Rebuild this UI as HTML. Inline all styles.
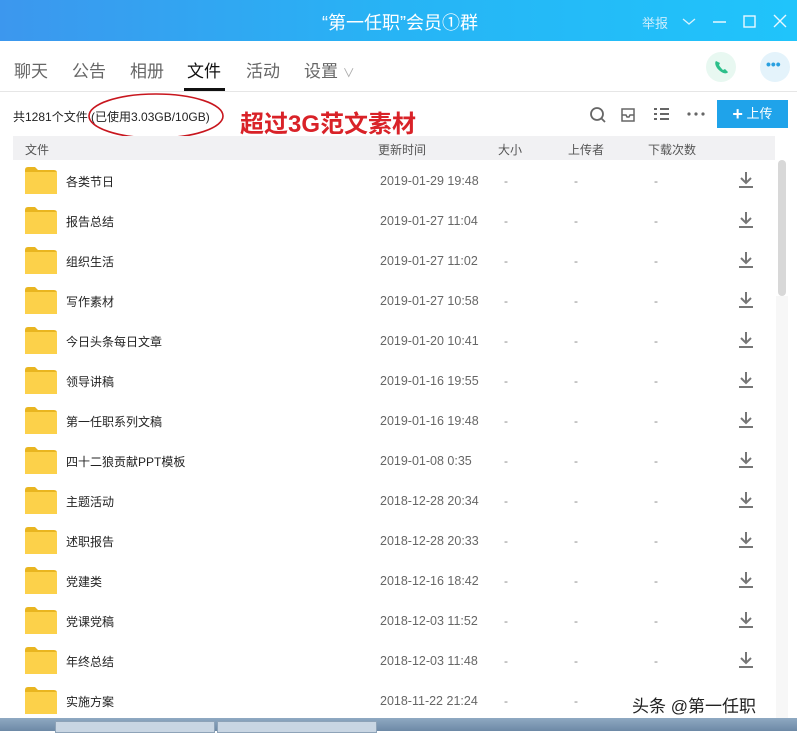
<!DOCTYPE html><html><head><meta charset="utf-8"><style>
body{margin:0;width:797px;height:731px;overflow:hidden;background:#fff;font-family:"Liberation Sans","Noto Sans CJK SC",sans-serif;position:relative}
.a{position:absolute;white-space:nowrap}
.title{left:0;top:0;width:797px;height:41px;background:linear-gradient(90deg,#3c97ee,#27b4f5 50%,#20c4fb)}
.tab{top:57px;font-size:17px;color:#666}
.row{position:absolute;left:0;width:775px;height:40px}
.fold{position:absolute;left:25px;top:-13px;width:32px;height:27px}
.nm{position:absolute;left:66px;top:-7px;font-size:12px;color:#222}
.dt{position:absolute;left:380px;top:-6px;font-size:12.5px;color:#666}
.ds{position:absolute;top:-6px;font-size:12px;color:#888}
.dl{position:absolute;left:738px;top:-9px}
</style></head><body>
<div class="a title"></div>
<div class="a" style="left:322px;top:9px;font-size:18px;color:#fff">“第一任职”会员①群</div>
<div class="a" style="left:642px;top:13px;font-size:13px;color:#cdeefd">举报</div>
<svg class="a" style="left:680px;top:12px" width="110" height="20"><path d="M3 7l6 5 6-5" stroke="#d8f3fe" fill="none" stroke-width="1.3"/><path d="M33 10h13" stroke="#e8f8ff" stroke-width="1.5"/><rect x="64" y="4" width="11" height="11" fill="none" stroke="#e8f8ff" stroke-width="1.4"/><path d="M94 3l12 12M106 3l-12 12" stroke="#e8f8ff" stroke-width="1.4"/></svg>
<div class="a tab" style="left:14px">聊天</div>
<div class="a tab" style="left:72px">公告</div>
<div class="a tab" style="left:130px">相册</div>
<div class="a tab" style="left:187px;color:#111">文件</div>
<div class="a" style="left:184px;top:88px;width:41px;height:3px;background:#111"></div>
<div class="a tab" style="left:246px">活动</div>
<div class="a tab" style="left:304px">设置 <span style="font-size:12px;color:#aaa">∨</span></div>
<div class="a" style="left:0;top:91px;width:797px;height:1px;background:#e6e6e6"></div>
<div class="a" style="left:706px;top:52px;width:30px;height:30px;border-radius:50%;background:#e8f8f1"></div>
<svg class="a" style="left:713px;top:59px" width="16" height="16"><path d="M3 2c-2 2 0 7 4 10s7 3 8 1l-3-3-2 1c-1-1-3-3-4-5l1-2z" fill="#2cbf8a"/></svg>
<div class="a" style="left:760px;top:52px;width:30px;height:30px;border-radius:50%;background:#e4f3fb"></div>
<div class="a" style="left:766px;top:56px;font-size:14px;color:#2aa0e0;font-weight:bold">•••</div>
<div class="a" style="left:13px;top:108px;font-size:12px;color:#222">共1281个文件 (已使用3.03GB/10GB)</div>
<svg class="a" style="left:88px;top:92px" width="140" height="50"><ellipse cx="68" cy="24" rx="67" ry="22" fill="none" stroke="#c8161e" stroke-width="1.6"/></svg>
<div class="a" style="left:240px;top:104px;font-size:24px;font-weight:bold;color:#d92228">超过3G范文素材</div>
<svg class="a" style="left:588px;top:104px" width="120" height="22"><circle cx="9" cy="10" r="6" fill="none" stroke="#666" stroke-width="1.8"/><path d="M13 14l4 4" stroke="#666" stroke-width="1.8"/><path d="M34 5h12v12h-12z M34 11h4l1 2h2l1-2h4" fill="none" stroke="#666" stroke-width="1.5"/><path d="M66 5h3M66 10h3M66 15h3M72 5h9M72 10h9M72 15h9" stroke="#666" stroke-width="2"/><circle cx="101" cy="10" r="1.6" fill="#666"/><circle cx="108" cy="10" r="1.6" fill="#666"/><circle cx="115" cy="10" r="1.6" fill="#666"/></svg>
<div class="a" style="left:717px;top:100px;width:71px;height:28px;background:#1fa3ea;color:#fff;font-size:13px;line-height:28px;text-align:center"><b style="font-size:18px;vertical-align:-2px">+</b> 上传</div>
<div class="a" style="left:13px;top:136px;width:762px;height:24px;background:#f1f1f3"></div>
<div class="a" style="left:25px;top:141px;font-size:12px;color:#555">文件</div>
<div class="a" style="left:378px;top:141px;font-size:12px;color:#555">更新时间</div>
<div class="a" style="left:498px;top:141px;font-size:12px;color:#555">大小</div>
<div class="a" style="left:568px;top:141px;font-size:12px;color:#555">上传者</div>
<div class="a" style="left:648px;top:141px;font-size:12px;color:#555">下载次数</div>
<div class="a" style="left:778px;top:160px;width:8px;height:136px;border-radius:4px;background:#d8d8d8"></div>
<div class="a" style="left:776px;top:296px;width:12px;height:422px;background:#f7f7f7"></div>
<div id="rows"></div>
<div class="a" style="left:632px;top:692px;font-size:17px;color:#222;text-shadow:0 0 2px #fff">头条 @第一任职</div>
<div class="a" style="left:0;top:718px;width:797px;height:13px;background:linear-gradient(#8fa9c2,#6d89a6)"></div>
<div class="a" style="left:55px;top:721px;width:158px;height:10px;background:#c9d6e3;border:1px solid #8ea3b8"></div>
<div class="a" style="left:217px;top:721px;width:158px;height:10px;background:#c9d6e3;border:1px solid #8ea3b8"></div>
<script>
var d=[["各类节日","2019-01-29 19:48"],["报告总结","2019-01-27 11:04"],["组织生活","2019-01-27 11:02"],["写作素材","2019-01-27 10:58"],["今日头条每日文章","2019-01-20 10:41"],["领导讲稿","2019-01-16 19:55"],["第一任职系列文稿","2019-01-16 19:48"],["四十二狼贡献PPT模板","2019-01-08 0:35"],["主题活动","2018-12-28 20:34"],["述职报告","2018-12-28 20:33"],["党建类","2018-12-16 18:42"],["党课党稿","2018-12-03 11:52"],["年终总结","2018-12-03 11:48"],["实施方案","2018-11-22 21:24"]];
var h="";d.forEach(function(r,i){var y=180+i*40;h+='<div class="row" style="top:'+y+'px"><svg class="fold" viewBox="0 0 32 27"><path d="M0 3q0-3 3-3h7l3 3h16q3 0 3 3v21H0z" fill="#e9b520"/><rect x="0" y="5" width="32" height="22" fill="#fcd14a"/></svg><div class="nm">'+r[0]+'</div><div class="dt">'+r[1]+'</div><div class="ds" style="left:504px">-</div><div class="ds" style="left:574px">-</div><div class="ds" style="left:654px">-</div>'+(i<13?'<svg class="dl" width="16" height="18"><path d="M8 1v10M3 7l5 5 5-5" stroke="#777" stroke-width="2" fill="none"/><path d="M1 16h14" stroke="#777" stroke-width="2"/></svg>':'')+'</div>';});
document.getElementById("rows").outerHTML=h;
</script>
</body></html>
